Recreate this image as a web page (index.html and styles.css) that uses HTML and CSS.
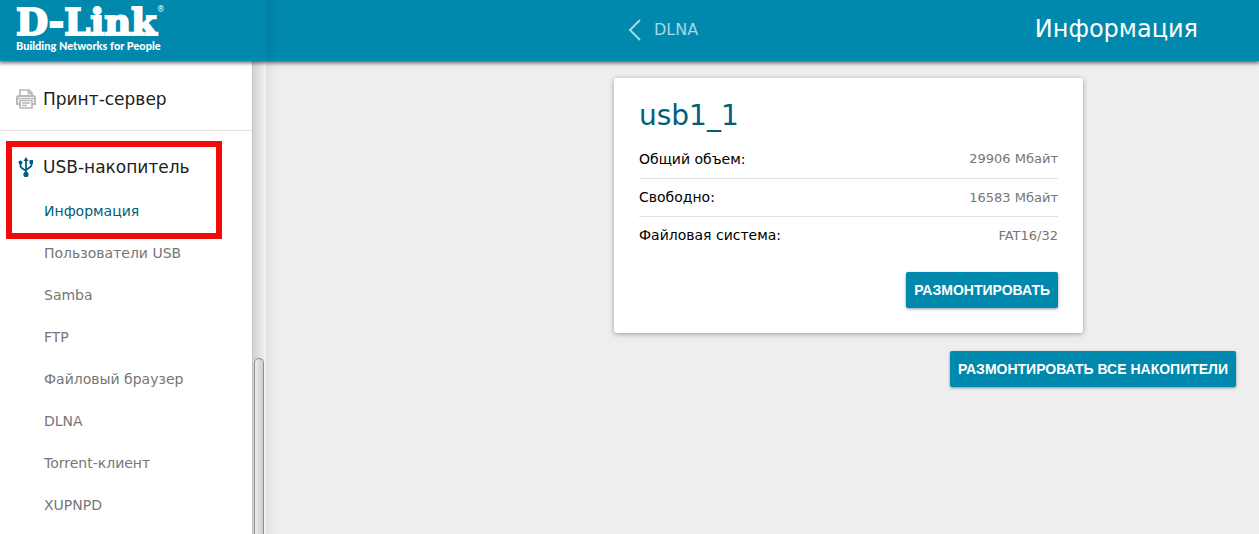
FILE: index.html
```html
<!DOCTYPE html>
<html lang="ru">
<head>
    <meta charset="UTF-8">
    <meta name="viewport" content="width=device-width, initial-scale=1.0">
    <title>D-Link - Информация</title>
    <link rel="stylesheet" href="styles.css">
</head>
<body>
    <header class="header">
        <a href="#" class="brand">
            <span class="brand-name">D-Link<sup class="brand-reg">®</sup></span>
            <span class="brand-slogan">Building Networks for People</span>
        </a>
        <div class="topbar">
            <a href="#" class="back">
                <svg class="back-icon" width="14" height="24" viewBox="0 0 14 24">
                    <path d="M12 2 L2 12 L12 22" fill="none" stroke="currentColor" stroke-width="2"/>
                </svg>
                DLNA
            </a>
            <h1 class="page-title">Информация</h1>
        </div>
    </header>

    <div class="layout">
        <aside class="sidebar">
            <nav class="menu">
                <a href="#" class="menu-head">
                    <svg class="menu-icon" width="20" height="20" viewBox="0 0 20 20" fill="none" stroke="#b8b8b8" stroke-width="2">
                        <path d="M4 7 V1 H13 L16 4 V7 M12.5 1 V4.5 H16" stroke-width="1.7"/>
                        <path d="M4 15 H1 V9 Q1 7 3 7 H17 Q19 7 19 9 V15 H16"/>
                        <path d="M1.5 9.5 H18.5" stroke-width="1.3"/>
                        <path d="M4 11.5 H16 V19 H4 Z" stroke-width="1.7"/>
                        <path d="M6 14 H14 M6 16.5 H11" stroke-width="1.3"/>
                    </svg>
                    Принт-сервер
                </a>
                <div class="menu-group">
                    <a href="#" class="menu-head">
                        <svg class="menu-icon" width="20" height="20" viewBox="0 0 20 20" fill="none" stroke="#00607a" stroke-width="1.8">
                            <path d="M10 17 V3 M4.500 5 V9 Q4.500 10 5.500 10.800 L10 14 M15.500 5 V8 Q15.500 9 14.500 9.800 L10 13"/>
                            <path d="M10 0 L12.500 4 H7.500 Z" fill="#00607a" stroke="none"/>
                            <circle cx="4.500" cy="5.500" r="2" fill="#00607a" stroke="none"/>
                            <rect x="13.500" y="3" width="3.500" height="4" fill="#00607a" stroke="none"/>
                            <circle cx="10" cy="17.400" r="2.600" fill="#00607a" stroke="none"/>
                        </svg>
                        USB-накопитель
                    </a>
                    <ul class="submenu">
                        <li><a href="#" class="active">Информация</a></li>
                        <li><a href="#">Пользователи USB</a></li>
                        <li><a href="#">Samba</a></li>
                        <li><a href="#">FTP</a></li>
                        <li><a href="#">Файловый браузер</a></li>
                        <li><a href="#">DLNA</a></li>
                        <li><a href="#">Torrent-клиент</a></li>
                        <li><a href="#">XUPNPD</a></li>
                    </ul>
                </div>
            </nav>
            <div class="scrollbar">
                <div class="scrollbar-thumb"></div>
            </div>
            <div class="highlight"></div>
        </aside>

        <main class="content">
            <section class="card">
                <h2 class="card-title">usb1_1</h2>
                <table class="info">
                    <tr>
                        <th scope="row">Общий объем:</th>
                        <td>29906 Мбайт</td>
                    </tr>
                    <tr>
                        <th scope="row">Свободно:</th>
                        <td>16583 Мбайт</td>
                    </tr>
                    <tr>
                        <th scope="row">Файловая система:</th>
                        <td>FAT16/32</td>
                    </tr>
                </table>
                <button type="button" class="btn">Размонтировать</button>
            </section>
            <button type="button" class="btn">Размонтировать все накопители</button>
        </main>
    </div>
</body>
</html>
```
FILE: styles.css
```css
* {
    box-sizing: border-box;
}

body {
    margin: 0;
    height: 100vh;
    display: flex;
    flex-direction: column;
    overflow: hidden;
    background-color: #eee;
    font-family: "DejaVu Sans", sans-serif;
    font-size: 14px;
    color: #000;
}

a {
    text-decoration: none;
    color: inherit;
}

/* Header */
.header {
    display: flex;
    height: 61px;
    flex-shrink: 0;
    position: relative;
    z-index: 2;
    background-color: #0088ad;
    box-shadow: 0 1px 4px 1px rgba(0, 0, 0, 0.6);
    color: #fff;
}

.brand {
    width: 266px;
    flex-shrink: 0;
    padding: 6px 16px;
    display: flex;
    flex-direction: column;
}

.brand-name {
    font-family: "DejaVu Serif", serif;
    font-size: 37px;
    font-weight: bold;
    line-height: 33px;
    white-space: nowrap;
    -webkit-text-stroke: 2px #fff;
}

.brand-reg {
    font-family: "DejaVu Sans", sans-serif;
    font-size: 8px;
    font-weight: normal;
    line-height: 8px;
    vertical-align: top;
    -webkit-text-stroke: 0;
}

.brand-slogan {
    font-family: Lato, sans-serif;
    font-size: 11px;
    font-weight: 900;
    line-height: 13px;
    white-space: nowrap;
}

.topbar {
    flex: 1;
    display: flex;
    align-items: center;
    justify-content: space-between;
    padding: 0 61px 4px 362px;
    background: linear-gradient(90deg, #0080a4, #0088ad 10px);
}

.back {
    display: flex;
    align-items: center;
    gap: 12px;
    padding-top: 2px;
    font-size: 16px;
    color: #a6d8e6;
}

.page-title {
    margin: 0;
    font-size: 24px;
    font-weight: normal;
}

/* Sidebar */
.layout {
    flex: 1;
    min-height: 0;
    display: flex;
}

.sidebar {
    width: 266px;
    flex-shrink: 0;
    display: flex;
    position: relative;
    background-color: #fff;
}

.menu {
    flex: 1;
    overflow: hidden;
}

.menu-head {
    display: flex;
    align-items: center;
    gap: 7px;
    height: 69px;
    padding: 7px 16px 0;
    font-size: 17px;
    color: #222;
}

.menu-group {
    border-top: 1px solid #e2e2e2;
}

.menu-group .menu-head {
    height: 59px;
    padding: 13px 16px 0;
}

.submenu {
    list-style: none;
    margin: 0;
    padding: 0;
}

.submenu a {
    display: block;
    padding-left: 44px;
    line-height: 42px;
    color: #767676;
}

.submenu .active {
    color: #00607a;
}

.scrollbar {
    width: 14px;
    padding: 297px 2px 0 1px;
    display: flex;
    border-left: 1px solid #c4c4c4;
    background: linear-gradient(90deg, #d2d2d2, #f2f2f2);
}

.scrollbar-thumb {
    flex: 1;
    border: 1px solid #909090;
    border-bottom: none;
    border-radius: 5px 5px 0 0;
    background: linear-gradient(90deg, #ececec, #cdcdcd);
}

/* Red frame over the current section */
.highlight {
    position: absolute;
    top: 80px;
    left: 6px;
    width: 216px;
    height: 98px;
    border: 6px solid #f20a0a;
    pointer-events: none;
}

/* Content */
.content {
    flex: 1;
    display: flex;
    flex-direction: column;
    align-items: flex-end;
    gap: 18px;
    padding: 17px 23px 20px 195px;
    background: linear-gradient(90deg, #e2e2e2, #eee 12px);
}

.card {
    align-self: center;
    width: 469px;
    padding: 20px 25px 25px;
    display: flex;
    flex-direction: column;
    align-items: flex-end;
    border-radius: 3px;
    background-color: #fff;
    box-shadow: 0 1px 5px rgba(0, 0, 0, 0.35);
}

.card-title {
    align-self: flex-start;
    margin: 0 0 6px;
    font-size: 28px;
    font-weight: normal;
    line-height: 36px;
    color: #00607a;
}

.info {
    width: 100%;
    margin-bottom: 18px;
    border-collapse: collapse;
}

.info th,
.info td {
    height: 38px;
    padding: 0;
}

.info tr + tr {
    border-top: 1px solid #e2e2e2;
}

.info th {
    text-align: left;
    font-weight: normal;
}

.info td {
    text-align: right;
    font-size: 13px;
    color: #767676;
}

.btn {
    height: 36px;
    padding: 0 8px;
    border: none;
    border-radius: 2px;
    background-color: #0088ad;
    box-shadow: 0 1px 3px rgba(0, 0, 0, 0.4);
    color: #fff;
    font-family: "Liberation Sans", sans-serif;
    font-size: 14px;
    font-weight: bold;
    text-transform: uppercase;
    cursor: pointer;
}

.btn:hover {
    background-color: #00789a;
}
```
